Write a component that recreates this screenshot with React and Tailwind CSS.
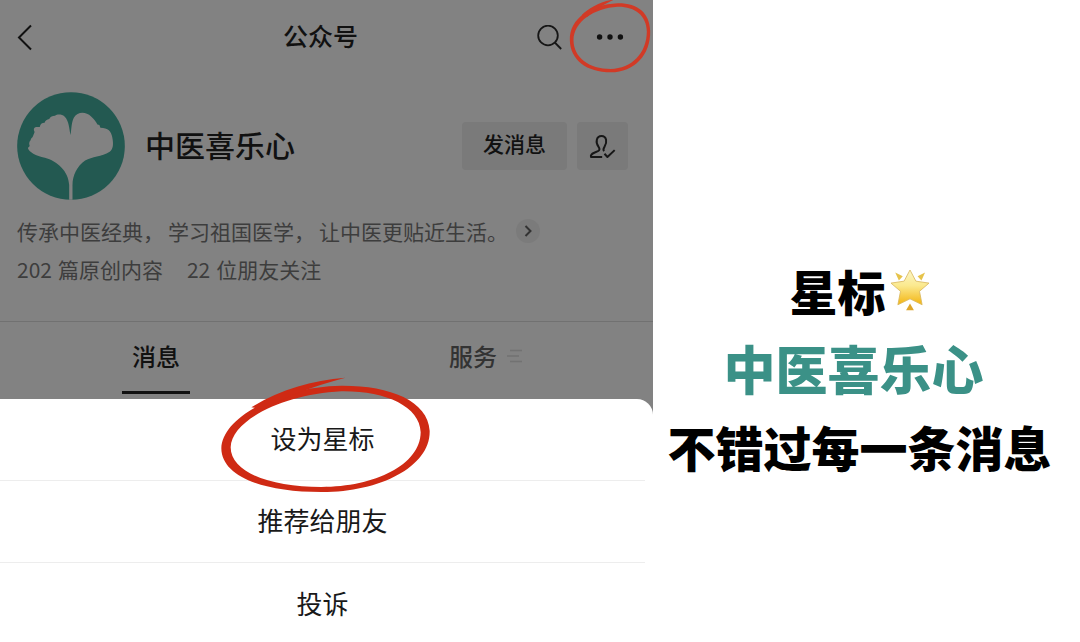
const intro = ['传承中医经典，', '学习祖国医学，', '让中医更贴近生活。'];

const stats = [
  { count: '202', label: '篇原创内容' },
  { count: '22', label: '位朋友关注' },
];

const actions = ['设为星标', '推荐给朋友', '投诉'];

function Avatar() {
  return (
    <svg viewBox="51 35 325 324" className="h-[108px] w-[108px] shrink-0" aria-hidden="true">
      <circle cx="213.5" cy="197" r="162" fill="#235951" />
      <path
        fill="#828282"
        d="M208 359V314C206 272 172 242 135 232C108 228 86 214 84 204C84 200 89 200 89 196C86 190 88 184 92 180C92 174 98 172 99 168L104 155C100 148 101 142 108 140C113 139 117 141 120 139C120 132 126 127 134 127C136 121 141 117 148 116C151 108 158 106 165 106C172 101 186 101 194 108C208 121 208 146 212 164C215 148 214 128 222 112C233 93 258 93 274 108C283 117 289 123 293 132L299 134L302 142C325 143 335 152 338 172C342 193 340 207 330 214C305 229 277 228 256 241C232 258 218 286 218 315V359Z"
      />
    </svg>
  );
}

function BackIcon() {
  return (
    <svg viewBox="0 0 15 27" className="h-[27px] w-[15px]" fill="none" stroke="#111" strokeWidth="2" aria-hidden="true">
      <path d="M14 1.5L2 13.5L14 25.5" />
    </svg>
  );
}

function SearchIcon() {
  return (
    <svg viewBox="0 0 25 25" className="h-[25px] w-[25px]" fill="none" stroke="#161616" strokeWidth="1.8" aria-hidden="true">
      <circle cx="11" cy="10.5" r="9.8" />
      <path d="M17.8 17.5L24.2 24" />
    </svg>
  );
}

function DotsIcon() {
  return (
    <svg viewBox="0 0 28 8" className="h-2 w-7" fill="#111" aria-hidden="true">
      <circle cx="3.6" cy="4" r="2.7" />
      <circle cx="14" cy="4" r="2.7" />
      <circle cx="24.4" cy="4" r="2.7" />
    </svg>
  );
}

function FollowedIcon() {
  return (
    <svg viewBox="480 398 82 76" className="h-[25px] w-[27px]" fill="none" stroke="#161616" strokeWidth="6" strokeLinejoin="round" aria-hidden="true">
      <path d="M520 468H486C484 461 489 458 496 455L507 450C513 447 513 443 509 437C499 424 502 404 518 404C534 404 536 424 527 437C523 443 523 447 526 450" />
      <path d="M527 458L536 468L558 447" />
    </svg>
  );
}

function MenuLines() {
  return (
    <svg viewBox="0 0 16 16" className="h-4 w-4" fill="none" stroke="#727272" strokeWidth="1.5" aria-hidden="true">
      <path d="M3 2.5H15M0 8H12M3 13.5H15" />
    </svg>
  );
}

function SmallCircle() {
  return (
    <svg
      viewBox="410 0 255 222"
      className="pointer-events-none absolute left-1/2 top-1/2 h-[74px] w-[85px] -translate-x-1/2 -translate-y-1/2"
      fill="#d13a26"
      aria-hidden="true"
    >
      <path
        fillRule="evenodd"
        d="M560 10C620 9 656 38 658 92C660 165 610 216 540 217C468 217 418 180 417 120C416 55 480 14 560 10ZM560 20C490 24 429 65 428 120C428 172 474 207 540 207C602 206 648 160 648 94C647 46 612 19 560 20Z"
      />
      <path d="M552 -2C508 4 474 24 452 46L468 52C490 30 520 12 552 -2Z" />
    </svg>
  );
}

function BigCircle() {
  return (
    <svg
      viewBox="0 0 750 420"
      className="pointer-events-none absolute -top-[29px] left-1/2 z-10 h-[140px] w-[250px] -translate-x-1/2"
      fill="#cf2a14"
      aria-hidden="true"
    >
      <path
        fillRule="evenodd"
        d="M430 47C575 46 690 92 695 182C698 290 545 367 370 366C195 366 71 320 70 235C72 142 245 50 430 47ZM430 64C260 72 100 150 98 232C98 308 220 351 370 351C530 351 667 285 668 187C666 108 560 62 430 64Z"
      />
      <path d="M442 23C340 32 240 60 160 112L196 118C260 80 340 50 442 23Z" />
    </svg>
  );
}

function GlowingStar() {
  return (
    <svg viewBox="24 36 122 128" className="h-[42px] w-10" aria-hidden="true">
      <defs>
        <linearGradient id="star" x1="0" y1="0" x2="0" y2="1">
          <stop offset="0" stopColor="#fbf6c9" />
          <stop offset="0.45" stopColor="#fbe98e" />
          <stop offset="1" stopColor="#f3b410" />
        </linearGradient>
      </defs>
      <path
        fill="url(#star)"
        stroke="#d9b75c"
        strokeWidth="2.5"
        strokeLinejoin="round"
        d="M85 39L103 73L143 79L114 104L122 145L85 127L48 145L56 104L27 79L67 73Z"
      />
      <g fill="#e6c34a">
        <path d="M40 47L63 58L51 71Z" />
        <path d="M131 47L108 58L120 71Z" />
        <path d="M85 141L97 162H73Z" fill="#dda62c" />
      </g>
    </svg>
  );
}

export default function App() {
  return (
    <main className="grid min-h-screen grid-cols-[653fr_427fr] bg-white font-['Noto_Sans_CJK_SC',sans-serif]">
      <section className="flex flex-col bg-[#828282] text-[#111]">
        <header className="grid h-[74px] grid-cols-[1fr_auto_1fr] items-center pl-[17px] pr-[29px]">
          <button type="button" aria-label="返回" className="justify-self-start">
            <BackIcon />
          </button>
          <h1 className="pb-1 text-[25px] font-medium leading-9">公众号</h1>
          <div className="flex items-center justify-end gap-[34px]">
            <button type="button" aria-label="搜索">
              <SearchIcon />
            </button>
            <button type="button" aria-label="更多" className="relative">
              <DotsIcon />
              <SmallCircle />
            </button>
          </div>
        </header>

        <div className="mt-[18px] flex items-center pl-[17px] pr-[25px]">
          <Avatar />
          <h2 className="ml-5 pb-1 text-[30px] font-medium leading-9">中医喜乐心</h2>
          <button type="button" className="ml-auto h-12 w-[105px] rounded bg-[#7a7a7a] pb-1 text-[21px] font-medium">
            发消息
          </button>
          <button type="button" aria-label="已关注" className="ml-[10px] flex h-12 w-[51px] items-center justify-center rounded bg-[#7a7a7a]">
            <FollowedIcon />
          </button>
        </div>

        <div className="mt-3 px-[17px] text-[21px] leading-[38px] text-[#3d3d3d]">
          <div className="flex items-center gap-1">
            {intro.map((part) => (
              <span key={part}>{part}</span>
            ))}
            <button type="button" aria-label="展开" className="ml-1 flex h-6 w-6 items-center justify-center rounded-full bg-[#7b7b7b]">
              <svg viewBox="0 0 8 12" className="h-3 w-2" fill="none" stroke="#333" strokeWidth="2" aria-hidden="true">
                <path d="M1.5 1L6.5 6L1.5 11" />
              </svg>
            </button>
          </div>
          <div className="flex gap-6">
            {stats.map((item) => (
              <p key={item.label} className="flex gap-[6px]">
                <span>{item.count}</span>
                <span>{item.label}</span>
              </p>
            ))}
          </div>
        </div>

        <nav className="mt-[33px] flex items-start justify-between border-t border-[#717171] pb-[5px] pl-[122px] pr-[130px] pt-4 text-2xl font-medium">
          <button type="button" className="w-[68px] border-b-[3px] border-[#111] pb-[17px] leading-9">
            消息
          </button>
          <button type="button" className="flex items-center gap-[10px] leading-9 text-[#333]">
            服务
            <MenuLines />
          </button>
        </nav>

        <ul className="grow rounded-tr-2xl bg-white pr-2 text-[26px] text-[#191919]">
          {actions.map((action, i) => (
            <li key={action} className="relative h-[82px] border-b border-[#ededed] last:h-[79px] last:border-b-0 last:pt-1">
              <button type="button" className="h-full w-full pb-1">
                {action}
              </button>
              {i === 0 && <BigCircle />}
            </li>
          ))}
        </ul>
      </section>

      <section className="flex flex-col items-center justify-center whitespace-nowrap pr-[14px] pt-[94px] text-[48px] font-black leading-[78px] text-black">
        <p className="flex items-center gap-1">
          星标
          <GlowingStar />
        </p>
        <p className="pr-3 text-[52px] text-[#3b9187]">中医喜乐心</p>
        <p>不错过每一条消息</p>
      </section>
    </main>
  );
}
